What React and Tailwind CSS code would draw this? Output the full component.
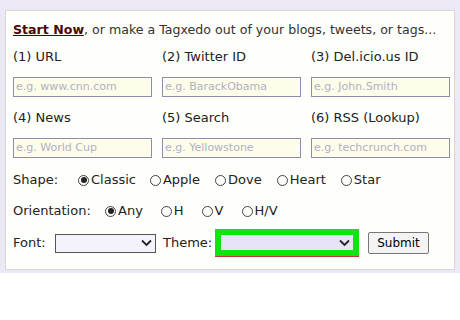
const sources = [
    { label: '(1) URL', hint: 'e.g. www.cnn.com' },
    { label: '(2) Twitter ID', hint: 'e.g. BarackObama' },
    { label: '(3) Del.icio.us ID', hint: 'e.g. John.Smith' },
    { label: '(4) News', hint: 'e.g. World Cup' },
    { label: '(5) Search', hint: 'e.g. Yellowstone' },
    { label: '(6) RSS (Lookup)', hint: 'e.g. techcrunch.com' },
];

const Radio = ({ on, label, className = '' }) => (
    <span className={`flex items-center ${className}`}>
        <span className="w-[11px] h-[11px] rounded-full border border-[#444] flex items-center justify-center mr-[2px]">
            {on && <span className="w-[6px] h-[6px] rounded-full bg-[#222]" />}
        </span>
        {label}
    </span>
);

const Chevron = () => (
    <svg width="11" height="8" viewBox="0 0 11 8" className="shrink-0">
        <path d="M1 1.5 L5.5 6 L10 1.5" fill="none" stroke="#222" strokeWidth="1.8" />
    </svg>
);

const Field = ({ hint }) => (
    <div className="h-[20px] w-[139px] border border-[#8c8cac] bg-[#fdfde9] flex items-center px-[2px] text-[11px] text-[#b0b0c4]">
        {hint}
    </div>
);

const App = () => (
    <div className="w-[460px] h-[320px] bg-white" style={{ fontFamily: '"DejaVu Sans", Verdana, sans-serif' }}>
        <div className="bg-[#ece8f6] pt-[10px] px-[5px] pb-[3px]">
            <div className="h-[260px] border border-[#d6d6d6] bg-[#fefefb] pl-[7px] text-[13px] text-[#222]">
                {/* Heading */}
                <div className="h-[20px] mt-[9px] flex items-center text-[12.6px] text-[#333] whitespace-nowrap">
                    <span className="font-bold underline text-[#4a0808]">Start Now</span>, or make a Tagxedo out of your blogs, tweets, or tags...
                </div>

                {/* Sources */}
                <div className="grid grid-cols-[149px_149px_149px] mt-[7px]">
                    {sources.map((s, i) => (
                        <div key={s.label} className={i > 2 ? 'mt-[11px]' : ''}>
                            <div className="h-[20px] flex items-center">{s.label}</div>
                            <div className="mt-[10px]">
                                <Field hint={s.hint} />
                            </div>
                        </div>
                    ))}
                </div>

                {/* Shape */}
                <div className="h-[20px] mt-[12px] flex items-center">
                    <span className="w-[65px]">Shape:</span>
                    <Radio on label="Classic" />
                    <Radio label="Apple" className="ml-[14px]" />
                    <Radio label="Dove" className="ml-[15px]" />
                    <Radio label="Heart" className="ml-[15px]" />
                    <Radio label="Star" className="ml-[15px]" />
                </div>

                {/* Orientation */}
                <div className="h-[20px] mt-[11px] flex items-center">
                    <span className="w-[92px]">Orientation:</span>
                    <Radio on label="Any" />
                    <Radio label="H" className="ml-[18px]" />
                    <Radio label="V" className="ml-[18px]" />
                    <Radio label="H/V" className="ml-[18px]" />
                </div>

                {/* Font / Theme / Submit */}
                <div className="h-[28px] mt-[8px] flex items-center">
                    <span className="w-[42px]">Font:</span>
                    <div className="h-[19px] w-[101px] border border-[#555] bg-[#f4f2fb] flex items-center justify-end pr-[3px]">
                        <Chevron />
                    </div>
                    <span className="ml-[7px] w-[52px]">Theme:</span>
                    <div className="h-[28px] w-[144px] bg-[#0fe60f] border-b border-[#d03030] p-[6px] flex">
                        <div className="flex-1 bg-[#e6e4f6] flex items-center justify-end pr-[3px]">
                            <Chevron />
                        </div>
                    </div>
                    <button className="ml-[9px] h-[22px] w-[61px] border border-[#777] rounded-[2px] bg-[#f4f4f4] text-[12px] text-black">
                        Submit
                    </button>
                </div>
            </div>
        </div>
    </div>
);

export default App;
